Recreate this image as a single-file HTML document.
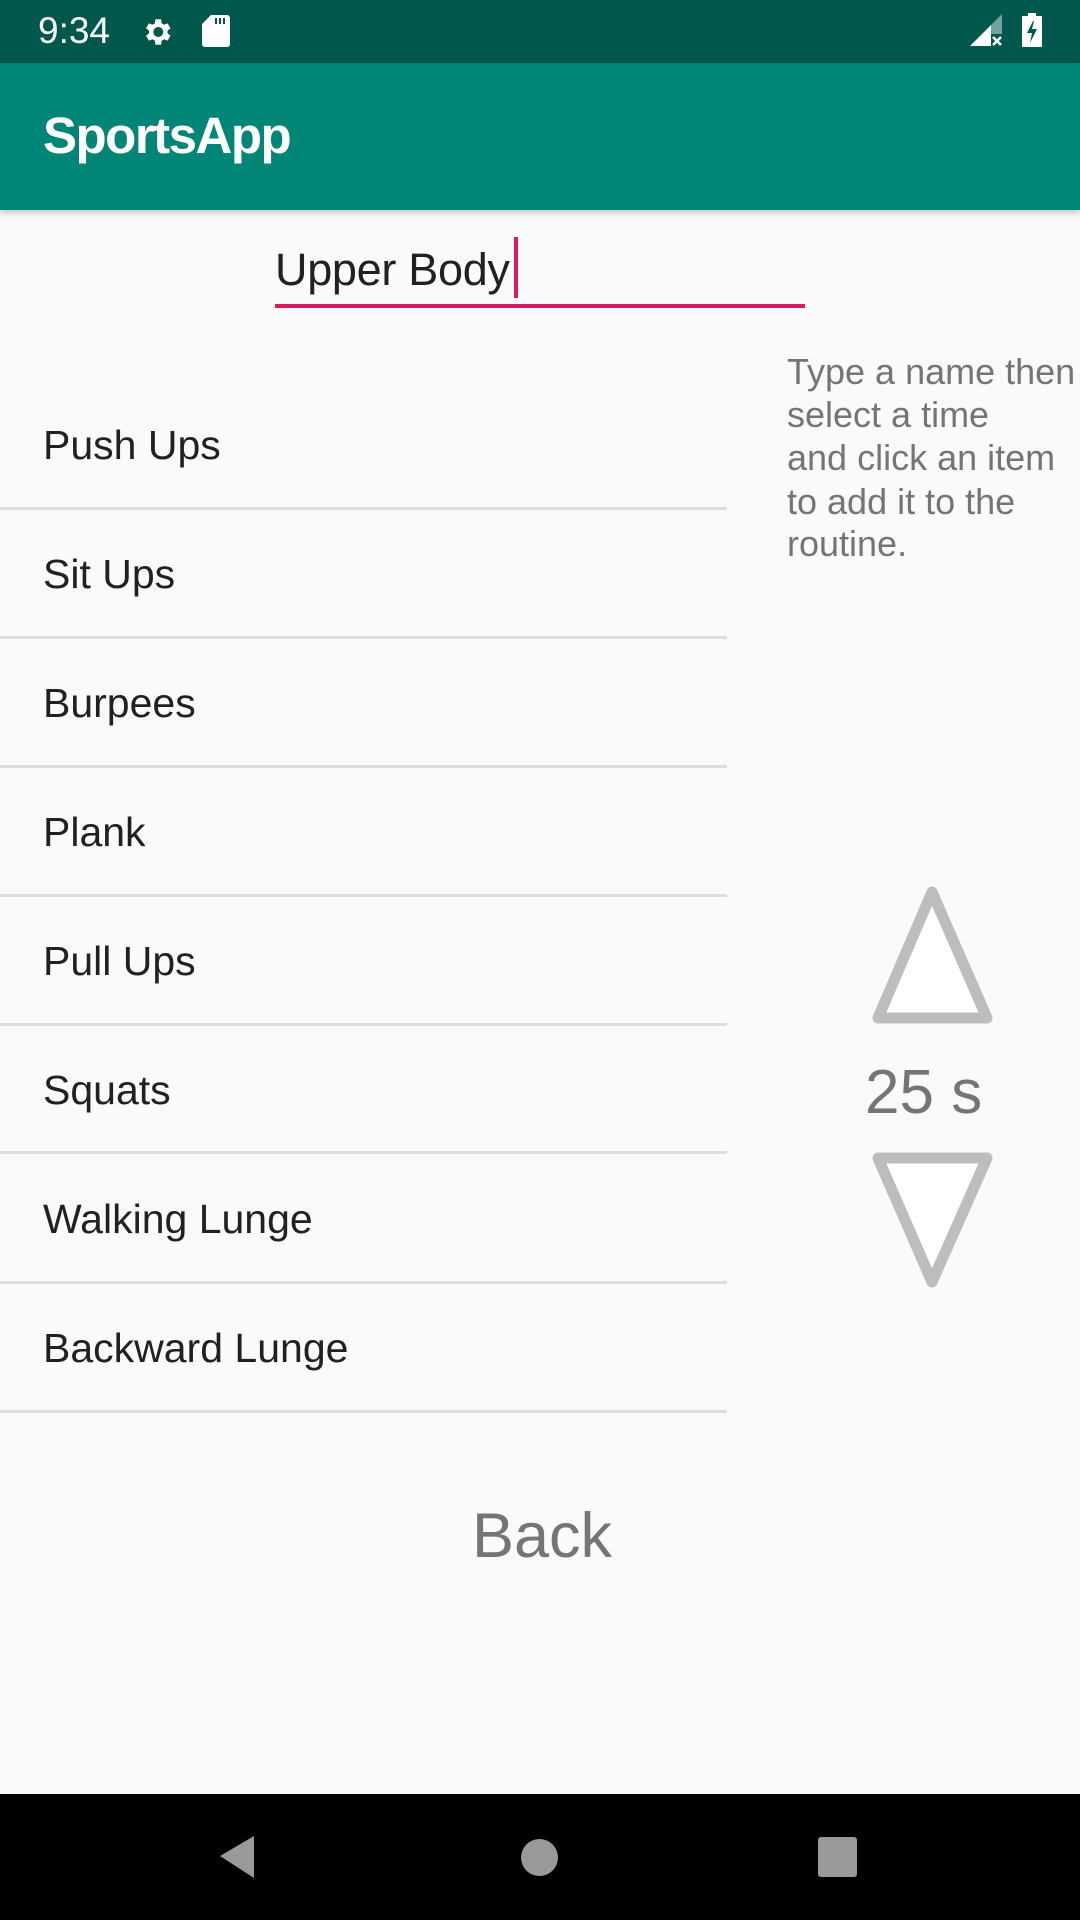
<!DOCTYPE html>
<html><head><meta charset="utf-8"><style>
html,body{margin:0;padding:0;}
body{width:1080px;height:1920px;position:relative;background:#fafafa;font-family:"Liberation Sans",sans-serif;overflow:hidden;}
.abs{position:absolute;}
.sb{left:0;top:0;width:1080px;height:63px;background:#00574b;}
.ab{left:0;top:63px;width:1080px;height:147px;background:#008577;box-shadow:0 3px 6px rgba(0,0,0,0.2);}
.t{white-space:nowrap;line-height:1;}
.item{left:43px;font-size:41px;color:#212121;}
.div{left:0;width:727px;height:3px;background:#dedede;}
.hint{left:787px;font-size:36px;color:#757575;}
.nav{left:0;top:1794px;width:1080px;height:126px;background:#000;}
</style></head><body>
<div class="abs sb"></div>
<div class="abs t" style="left:38px;top:12px;font-size:37px;color:#fff;">9:34</div>
<svg class="abs" style="left:140px;top:15px" width="34" height="34" viewBox="0 0 24 24"><path fill="#fff" d="M19.4 13a7.5 7.5 0 0 0 0-2l2.1-1.6-2-3.5-2.5 1a7 7 0 0 0-1.7-1L14.9 3h-4l-.4 2.9a7 7 0 0 0-1.7 1l-2.5-1-2 3.5L6.4 11a7.5 7.5 0 0 0 0 2l-2.1 1.6 2 3.5 2.5-1a7 7 0 0 0 1.7 1l.4 2.9h4l.4-2.9a7 7 0 0 0 1.7-1l2.5 1 2-3.5zM12.9 15.5a3.5 3.5 0 1 1 0-7 3.5 3.5 0 0 1 0 7z"/></svg>
<svg class="abs" style="left:202px;top:15px" width="28" height="32" viewBox="0 0 28 32"><path fill="#fff" d="M9 0h16a3 3 0 0 1 3 3v26a3 3 0 0 1-3 3H3a3 3 0 0 1-3-3V9z"/><rect x="13" y="3" width="2" height="6" fill="#00574b"/><rect x="17" y="3" width="2" height="6" fill="#00574b"/><rect x="21" y="3" width="2" height="6" fill="#00574b"/></svg>
<svg class="abs" style="left:970px;top:14px" width="36" height="34" viewBox="0 0 36 34"><path fill="#fff" d="M0 32L21 11V32z"/><path fill="#fff" opacity="0.45" d="M21 11L32 0V20H21z"/><path stroke="#fff" stroke-width="2.5" d="M23 23l8 8M31 23l-8 8"/></svg>
<svg class="abs" style="left:1022px;top:13px" width="20" height="34" viewBox="0 0 20 34"><path fill="#fff" d="M6 0h8v3h6v31H0V3h6z"/><path fill="#00574b" d="M11 8L5 20h5l-2 10 7-14h-5l2-8z"/></svg>
<div class="abs ab"></div>
<div class="abs t" style="left:43px;top:110px;font-size:51px;color:#fff;font-weight:bold;letter-spacing:-1.5px;">SportsApp</div>
<div class="abs t" style="left:275px;top:247px;font-size:45px;color:#212121;letter-spacing:-0.3px;">Upper Body</div>
<div class="abs" style="left:514px;top:237px;width:4px;height:61px;background:#d81b60;"></div>
<div class="abs" style="left:275px;top:304px;width:530px;height:4px;background:#d81b60;"></div>
<div class="abs t hint" style="top:354px;">Type a name then</div>
<div class="abs t hint" style="top:397px;">select a time</div>
<div class="abs t hint" style="top:440px;">and click an item</div>
<div class="abs t hint" style="top:484px;">to add it to the</div>
<div class="abs t hint" style="top:526px;">routine.</div>
<div class="abs t item" style="top:425px;">Push Ups</div><div class="abs div" style="top:507px;"></div>
<div class="abs t item" style="top:554px;">Sit Ups</div><div class="abs div" style="top:636px;"></div>
<div class="abs t item" style="top:683px;">Burpees</div><div class="abs div" style="top:765px;"></div>
<div class="abs t item" style="top:812px;">Plank</div><div class="abs div" style="top:894px;"></div>
<div class="abs t item" style="top:941px;">Pull Ups</div><div class="abs div" style="top:1023px;"></div>
<div class="abs t item" style="top:1070px;">Squats</div><div class="abs div" style="top:1151px;"></div>
<div class="abs t item" style="top:1199px;">Walking Lunge</div><div class="abs div" style="top:1281px;"></div>
<div class="abs t item" style="top:1328px;">Backward Lunge</div><div class="abs div" style="top:1410px;"></div>
<svg class="abs" style="left:860px;top:875px" width="145" height="420" viewBox="0 0 145 420"><g fill="#fff" stroke="#bdbdbd" stroke-width="11" stroke-linejoin="round"><path d="M72 17L18 143H127z"/><path d="M18 283H127L72 407z"/></g></svg>
<div class="abs t" style="left:865px;top:1062px;font-size:62px;color:#757575;">25 s</div>
<div class="abs t" style="left:472px;top:1505px;font-size:63px;color:#757575;">Back</div>
<div class="abs nav"></div>
<svg class="abs" style="left:215px;top:1834px" width="45" height="46" viewBox="0 0 45 46"><path fill="#999" d="M39 2V44L5 22z"/></svg>
<div class="abs" style="left:521px;top:1839px;width:37px;height:37px;border-radius:50%;background:#999;"></div>
<div class="abs" style="left:818px;top:1837px;width:39px;height:40px;border-radius:3px;background:#999;"></div>
</body></html>
